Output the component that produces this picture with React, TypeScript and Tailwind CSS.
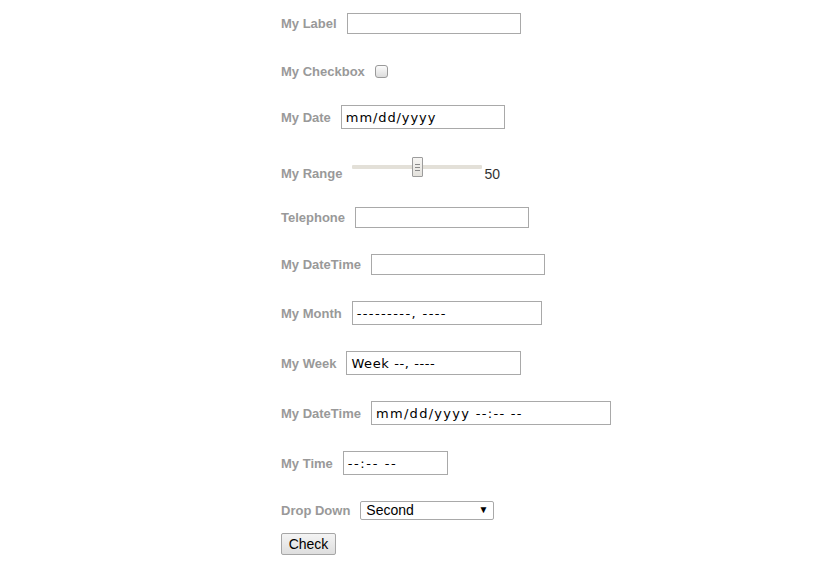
import React from "react";

const label = "text-[13px] font-bold text-[#999] whitespace-nowrap";
const box = "border border-[#a9a9a9] bg-white";
const mono = "font-['DejaVu_Sans',sans-serif] text-[13px] text-black leading-none";

function Row({
  text,
  className,
  children,
}: {
  text: string;
  className: string;
  children: React.ReactNode;
}) {
  return (
    <div className={`flex items-center gap-[10px] h-[24px] ${className}`}>
      <span className={`${label} pt-[2px]`}>{text}</span>
      {children}
    </div>
  );
}

function TextBox({ width }: { width: string }) {
  return <input type="text" className={`${box} ${width} h-[21px] px-1 outline-none`} />;
}

function FieldBox({ width, value, tracking }: { width: string; value: string; tracking: string }) {
  return (
    <div className={`${box} ${width} h-[24px] flex items-center px-[4px]`}>
      <span className={`${mono} ${tracking}`}>{value}</span>
    </div>
  );
}

export default function App() {
  return (
    <div className="min-h-screen bg-white font-['Liberation_Sans',Arial,sans-serif]">
      <form className="ml-[281px] pt-[11px] flex flex-col items-start">
        <Row text="My Label" className="">
          <TextBox width="w-[174px]" />
        </Row>

        <Row text="My Checkbox" className="mt-[24px]">
          <div className="w-[13px] h-[13px] rounded-[3px] border border-[#9a9a9a] bg-gradient-to-b from-[#fcfcfc] to-[#dcdcdc]" />
        </Row>

        <Row text="My Date" className="mt-[22px]">
          <FieldBox width="w-[164px]" value="mm/dd/yyyy" tracking="tracking-[0.9px]" />
        </Row>

        <Row text="My Range" className="mt-[32px]">
          <div className="relative w-[130px] h-[20px] mb-[12px]">
            <div className="absolute left-0 right-0 top-[8px] h-[4px] bg-[#e3e0d8] rounded-[1px]" />
            <div className="absolute left-[60px] top-0 w-[11px] h-[20px] border border-[#9c9c9c] bg-gradient-to-b from-[#f6f5f3] to-[#e4e2dd] rounded-[1px] flex flex-col items-center justify-center gap-[2px]">
              <div className="w-[5px] h-px bg-[#8a8a8a]" />
              <div className="w-[5px] h-px bg-[#8a8a8a]" />
              <div className="w-[5px] h-px bg-[#8a8a8a]" />
            </div>
          </div>
          <span className="-ml-[8px] pt-[2px] text-[14px] text-[#333]">50</span>
        </Row>

        <Row text="Telephone" className="mt-[20px]">
          <TextBox width="w-[174px]" />
        </Row>

        <Row text="My DateTime" className="mt-[23px]">
          <TextBox width="w-[174px]" />
        </Row>

        <Row text="My Month" className="mt-[25px]">
          <FieldBox width="w-[190px]" value="---------, ----" tracking="tracking-[1.4px]" />
        </Row>

        <Row text="My Week" className="mt-[26px]">
          <FieldBox width="w-[175px]" value="Week --, ----" tracking="tracking-[0.6px]" />
        </Row>

        <Row text="My DateTime" className="mt-[26px]">
          <FieldBox width="w-[240px]" value="mm/dd/yyyy --:-- --" tracking="tracking-[1.3px]" />
        </Row>

        <Row text="My Time" className="mt-[26px]">
          <FieldBox width="w-[105px]" value="--:-- --" tracking="tracking-[1.6px]" />
        </Row>

        <Row text="Drop Down" className="mt-[23px]">
          <div className={`${box} rounded-[2px] w-[134px] h-[19px] flex items-center justify-between pl-[5px] pr-[5px]`}>
            <span className="text-[14px] text-black leading-none">Second</span>
            <span className="text-[10px] text-black leading-none">▼</span>
          </div>
        </Row>

        <button
          type="button"
          className="mt-[11px] w-[55px] h-[22px] border border-[#a6a6a6] rounded-[2px] bg-gradient-to-b from-[#f4f4f4] to-[#dedede] text-[14px] text-black leading-none"
        >
          Check
        </button>
      </form>
    </div>
  );
}
